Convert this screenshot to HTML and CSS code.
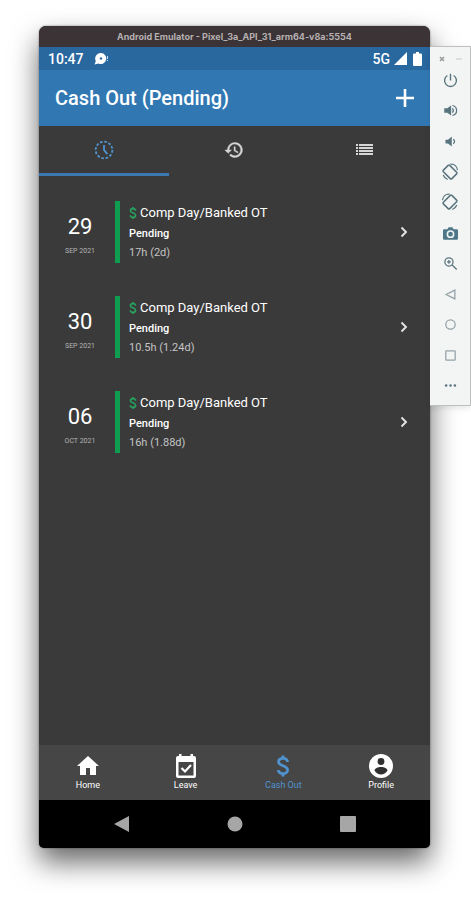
FILE: index.html
```html
<!DOCTYPE html>
<html lang="en">
<head>
<meta charset="utf-8">
<meta name="viewport" content="width=device-width, initial-scale=1">
<title>Cash Out (Pending)</title>
<link rel="stylesheet" href="styles.css">
</head>
<body>
<svg class="symbols" aria-hidden="true">
  <symbol id="dollar" viewBox="0 0 14 24"><path d="M11.500 8C11.500 5.700 9.800 4.300 7 4.300S2.600 5.700 2.600 7.900C2.600 12.500 11.600 11 11.600 16C11.600 18.300 9.600 19.700 7 19.700S2.300 18.300 2.300 16M7 1.500v3M7 19.500v3" fill="none" stroke="currentColor" stroke-width="2.800"/></symbol>
  <symbol id="chevron" viewBox="0 0 10 12"><path d="M2.500 1.500L7 6l-4.500 4.500" fill="none" stroke="currentColor" stroke-width="1.900"/></symbol>
  <symbol id="rotate" viewBox="0 0 24 24"><rect x="6" y="4" width="12" height="16" rx="1.500" transform="rotate(-45 12 12)" fill="none" stroke="currentColor" stroke-width="2"/><path d="M12.500 1.500c5.500-.5 9 3 9.500 8M3 16c1 3 3 5 6 6" fill="none" stroke="currentColor" stroke-width="1.600"/></symbol>
</svg>
<main class="phone">
  <header class="titlebar">Android Emulator - Pixel_3a_API_31_arm64-v8a:5554</header>
  <div class="status">
    <time>10:47</time>
    <svg class="notice" viewBox="0 0 15 12"><path d="M7 0a5.500 5.500 0 1 1-2.500 10.500L.5 11.500l1.300-3.500A5.500 5.500 0 0 1 7 0z" fill="#fff"/><circle cx="7" cy="5.500" r="1.200" fill="#29679f"/><path d="M13.500 3v3M13.500 7v1" stroke="#c4d8eb" stroke-width="1"/></svg>
    <span class="network">5G</span>
    <svg class="signal" viewBox="0 0 13 13"><path d="M13 0v13H0z" fill="#fff"/></svg>
    <svg class="battery" viewBox="0 0 9 14"><path d="M3 0h3v1.500h2q1 0 1 1V13q0 1-1 1H1q-1 0-1-1V2.500q0-1 1-1h2z" fill="#fff"/></svg>
  </div>
  <div class="appbar">
    <h1>Cash Out (Pending)</h1>
    <button class="add" aria-label="Add"><svg viewBox="0 0 18 18"><path d="M9 0v18M0 9h18" stroke="currentColor" stroke-width="2.600"/></svg></button>
  </div>
  <div class="tabs" role="tablist">
    <button class="tab selected" role="tab" aria-selected="true" aria-label="Pending"><svg viewBox="0 0 24 24" fill="none" stroke="currentColor" stroke-width="2.200"><circle cx="12" cy="12" r="10" stroke-dasharray="3.200 2.036"/><path d="M12 6v6l4 5"/></svg></button>
    <button class="tab" role="tab" aria-label="History"><svg viewBox="0 0 24 24" fill="currentColor" stroke="currentColor" stroke-width=".5"><path d="M13 3a9 9 0 0 0-9 9H1l3.900 3.900.1.100L9 12H6a7 7 0 1 1 2.100 4.900l-1.400 1.400A9 9 0 1 0 13 3zm-1 5v5l4.300 2.500.7-1.200-3.500-2.100V8z"/></svg></button>
    <button class="tab" role="tab" aria-label="List"><svg viewBox="0 0 20 20" fill="none" stroke="currentColor" stroke-width="2"><path d="M1 5h2M4 5h14M1 8h2M4 8h14M1 11h2M4 11h14M1 14h2M4 14h14"/></svg></button>
  </div>
  <ul class="requests">
    <li class="request">
      <div class="date"><strong>29</strong><span>SEP 2021</span></div>
      <div class="detail"><h2><svg><use href="#dollar"/></svg>Comp Day/Banked OT</h2><p class="state">Pending</p><p class="hours">17h (2d)</p></div>
      <svg class="chevron"><use href="#chevron"/></svg>
    </li>
    <li class="request">
      <div class="date"><strong>30</strong><span>SEP 2021</span></div>
      <div class="detail"><h2><svg><use href="#dollar"/></svg>Comp Day/Banked OT</h2><p class="state">Pending</p><p class="hours">10.5h (1.24d)</p></div>
      <svg class="chevron"><use href="#chevron"/></svg>
    </li>
    <li class="request">
      <div class="date"><strong>06</strong><span>OCT 2021</span></div>
      <div class="detail"><h2><svg><use href="#dollar"/></svg>Comp Day/Banked OT</h2><p class="state">Pending</p><p class="hours">16h (1.88d)</p></div>
      <svg class="chevron"><use href="#chevron"/></svg>
    </li>
  </ul>
  <nav class="nav">
    <a href="#home"><svg viewBox="0 0 24 24"><path d="M10 21v-7h4v7h6v-9h3L12 2 1 12h3v9z" fill="currentColor"/></svg>Home</a>
    <a href="#leave"><svg viewBox="0 0 24 24"><path d="M5 0h2.500v2h9V0H19v2h1q2 0 2 2v18q0 2-2 2H4q-2 0-2-2V4q0-2 2-2h1zM4.500 8v13.500h15V8z" fill="currentColor" fill-rule="evenodd"/><path d="M7.500 14l3.500 3.500 6-6.500" fill="none" stroke="currentColor" stroke-width="2.200"/></svg>Leave</a>
    <a href="#cash" class="current" aria-current="page"><svg><use href="#dollar"/></svg>Cash Out</a>
    <a href="#profile"><svg viewBox="0 0 24 24"><circle cx="12" cy="12" r="12" fill="currentColor"/><circle cx="12" cy="7.500" r="3.400" fill="#303030"/><path d="M5.500 16.500C6 11.800 18 11.800 18.500 16.500Q16 20.500 12 20.500T5.500 16.500z" fill="#303030"/></svg>Profile</a>
  </nav>
  <div class="system">
    <button aria-label="Back"><svg viewBox="0 0 16 16"><path d="M15 0v16L0 8z" fill="currentColor"/></svg></button>
    <button aria-label="Home"><svg viewBox="0 0 16 16"><circle cx="8" cy="8" r="7.500" fill="currentColor"/></svg></button>
    <button aria-label="Overview"><svg viewBox="0 0 16 16"><rect width="16" height="16" rx="1" fill="currentColor"/></svg></button>
  </div>
</main>
<aside class="tools">
  <div class="window-buttons">
    <button aria-label="Close"><svg viewBox="0 0 6 6"><path d="M1 1l4 4M5 1L1 5" stroke="currentColor" stroke-width="1.600"/></svg></button>
    <button aria-label="Minimize"><svg viewBox="0 0 6 6"><path d="M0 3h6" stroke="#c4c8c9" stroke-width="1"/></svg></button>
  </div>
  <button aria-label="Power"><svg viewBox="0 0 24 24" fill="none" stroke="currentColor" stroke-width="2.200"><path d="M12 1v11M7 4a9.500 9.500 0 1 0 10 0"/></svg></button>
  <button aria-label="Volume up"><svg viewBox="0 0 24 24"><path d="M2 8.500h5L13 4v16l-6-4.500H2z" fill="currentColor"/><path d="M15 8.500q3 3.500 0 7M15 4c9 2 9 14 0 16" fill="none" stroke="currentColor" stroke-width="2"/></svg></button>
  <button aria-label="Volume down"><svg viewBox="0 0 24 24"><path d="M4 9h4l6-5v16l-6-5H4z" fill="currentColor"/><path d="M16.500 8.500q4 3.500 0 7" fill="none" stroke="currentColor" stroke-width="2"/></svg></button>
  <button aria-label="Rotate left"><svg class="large"><use href="#rotate"/></svg></button>
  <button aria-label="Rotate right"><svg class="large mirrored"><use href="#rotate"/></svg></button>
  <button aria-label="Screenshot"><svg viewBox="0 0 24 24"><path d="M2 5h5l2-3h6l2 3h5q2 0 2 2v13q0 2-2 2H2q-2 0-2-2V7q0-2 2-2z" fill="#4f7787"/><circle cx="12" cy="13" r="5" fill="#4f7787" stroke="#eef4f5" stroke-width="2.500"/></svg></button>
  <button aria-label="Zoom"><svg viewBox="0 0 24 24" fill="none" stroke="currentColor" stroke-width="2"><circle cx="9.500" cy="9.500" r="6.500"/><path d="M14.500 14.500l7.500 7M6.500 9.500h6M9.500 6.500v6"/></svg></button>
  <button class="light" aria-label="Back"><svg viewBox="0 0 24 24" fill="none" stroke="currentColor" stroke-width="2"><path d="M19 5v14L5 12z"/></svg></button>
  <button class="light" aria-label="Home"><svg viewBox="0 0 24 24" fill="none" stroke="currentColor" stroke-width="2"><circle cx="12" cy="12" r="7.500"/></svg></button>
  <button class="light" aria-label="Overview"><svg viewBox="0 0 24 24" fill="none" stroke="currentColor" stroke-width="2"><rect x="4.500" y="4.500" width="15" height="15" rx="1"/></svg></button>
  <button aria-label="More"><svg viewBox="0 0 24 24" fill="currentColor"><circle cx="5" cy="12" r="2"/><circle cx="12" cy="12" r="2"/><circle cx="19" cy="12" r="2"/></svg></button>
</aside>
</body>
</html>
```
FILE: styles.css
```css
* { box-sizing: border-box; }

body {
  margin: 0;
  min-height: 100vh;
  padding: 26px 0 52px 39px;
  display: flex;
  background: #fff;
  font-family: Roboto, "Liberation Sans", sans-serif;
  overflow-x: hidden;
}

h1, h2, p, ul { margin: 0; padding: 0; }
svg { display: block; flex: none; }
button { border: 0; padding: 0; background: none; color: inherit; font: inherit; }
.symbols { position: absolute; width: 0; height: 0; }

.phone {
  flex: 1;
  min-width: 0;
  display: flex;
  flex-direction: column;
  color: #fff;
  background: #3a3a3a;
  border-radius: 7px 7px 5px 5px;
  overflow: hidden;
  box-shadow: 0 0 2px rgba(0, 0, 0, .5), 0 14px 28px rgba(0, 0, 0, .6);
}

.titlebar {
  height: 21px;
  background: #3b3335;
  color: #b5b0b1;
  font: 700 9px/21px Inter, sans-serif;
  text-align: center;
  white-space: nowrap;
}

.status {
  height: 23px;
  padding: 0 8px 0 9px;
  display: flex;
  align-items: center;
  background: #29679f;
  font-size: 14px;
  font-weight: 500;
}
.notice { width: 15px; height: 12px; margin-left: 10px; }
.network { margin-left: auto; }
.signal { width: 13px; height: 13px; margin-left: 4px; }
.battery { width: 9px; height: 14px; margin-left: 6px; }

.appbar {
  height: 56px;
  padding: 0 16px;
  display: flex;
  align-items: center;
  justify-content: space-between;
  background: #3178b3;
}
.appbar h1 { font-size: 20px; font-weight: 500; line-height: 26px; }
.add svg { width: 18px; height: 18px; }

.tabs { display: flex; height: 50px; }
.tab {
  flex: 1;
  display: flex;
  align-items: center;
  justify-content: center;
  border-bottom: 3px solid transparent;
  color: #d6d6d6;
}
.tab svg { width: 20px; height: 20px; }
.tab.selected { color: #5093cf; border-color: #3978b0; }

.requests {
  flex: 1;
  padding: 25px 21px 25px 15px;
  display: flex;
  flex-direction: column;
  gap: 33px;
  list-style: none;
}
.request { display: flex; align-items: center; }
.date {
  width: 52px;
  margin-right: 9px;
  padding-top: 6px;
  display: flex;
  flex-direction: column;
  align-items: center;
}
.date strong { font-size: 22px; font-weight: 400; line-height: 26px; }
.date span { margin-top: 5px; font-size: 7px; line-height: 12px; color: #b4b4b4; }
.detail { flex: 1; padding-left: 9px; border-left: 5px solid #0f9d51; }
.detail h2 {
  display: flex;
  align-items: center;
  gap: 3px;
  font-size: 13px;
  font-weight: 400;
  line-height: 24px;
}
.detail h2 svg { width: 8px; height: 14px; color: #26a45f; }
.state { font-size: 11px; font-weight: 500; line-height: 18px; }
.hours { font-size: 11px; line-height: 20px; color: #c4c4c4; }
.chevron { width: 10px; height: 12px; color: #e4e4e4; }

.nav { display: flex; height: 55px; background: #464646; }
.nav a {
  flex: 1;
  padding-top: 9px;
  display: flex;
  flex-direction: column;
  align-items: center;
  color: #fff;
  font-size: 9px;
  line-height: 14px;
  text-decoration: none;
}
.nav svg { width: 24px; height: 24px; }
.nav .current { color: #4f93cf; }

.system {
  height: 48px;
  padding: 0 26px;
  display: flex;
  align-items: center;
  justify-content: space-around;
  background: #000;
  color: #a6a6a6;
}
.system svg { width: 16px; height: 16px; }

.tools {
  width: 41px;
  height: 360px;
  margin-top: 20px;
  padding: 6px 0 4px;
  display: flex;
  flex-direction: column;
  align-items: center;
  position: relative;
  background: #f3f4f4;
  border: 1px solid #bfbfbf;
  border-left: 0;
  color: #58747d;
  box-shadow: 0 2px 6px rgba(0, 0, 0, .1);
}
.tools > button { flex: 1; display: grid; place-items: center; }
.tools svg { width: 15px; height: 15px; }
.tools .large { width: 18px; height: 18px; }
.mirrored { transform: scaleX(-1); }
.tools .light { color: #94a2a7; }
.tools .window-buttons { display: flex; gap: 11px; height: 12px; color: #999; }
.tools .window-buttons svg { width: 6px; height: 6px; }
```
